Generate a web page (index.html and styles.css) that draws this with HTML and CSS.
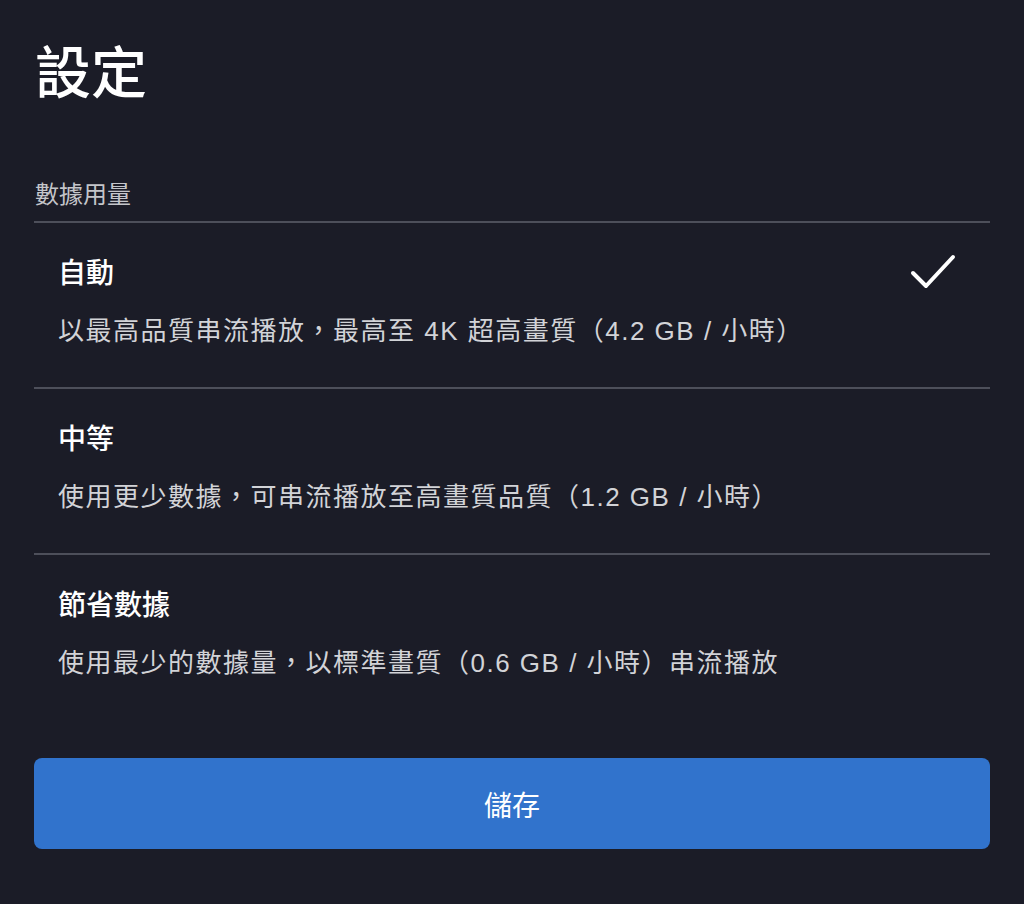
FILE: index.html
```html
<!DOCTYPE html>
<html lang="zh-Hant">
<head>
<meta charset="utf-8">
<title>設定</title>
<link rel="stylesheet" href="styles.css">
</head>
<body>
<main class="page">
  <h1 class="title">設定</h1>
  <div class="section-label">數據用量</div>
  <ul class="options">
    <li class="option selected">
      <div class="option-text">
        <div class="option-title">自動</div>
        <div class="option-desc">以最高品質串流播放，最高至 4K 超高畫質（4.2 GB / 小時）</div>
      </div>
      <svg class="check" width="46" height="40" viewBox="0 0 46 40" aria-hidden="true">
        <path d="M3 19 L16 32 L43 3" fill="none" stroke="#ffffff" stroke-width="4" stroke-linecap="round" stroke-linejoin="round"/>
      </svg>
    </li>
    <li class="option">
      <div class="option-text">
        <div class="option-title">中等</div>
        <div class="option-desc">使用更少數據，可串流播放至高畫質品質（1.2 GB / 小時）</div>
      </div>
    </li>
    <li class="option">
      <div class="option-text">
        <div class="option-title">節省數據</div>
        <div class="option-desc">使用最少的數據量，以標準畫質（0.6 GB / 小時）串流播放</div>
      </div>
    </li>
  </ul>
  <button class="save" type="button">儲存</button>
</main>
</body>
</html>
```
FILE: styles.css
```css
html, body {
  margin: 0;
  padding: 0;
  background: #1b1c27;
}
body {
  font-family: "Liberation Sans", "Noto Sans CJK TC", sans-serif;
  color: #ffffff;
}
.page {
  padding: 34px 34px 0;
}
.title {
  margin: 0;
  padding-left: 1px;
  font-size: 56px;
  line-height: 80px;
  font-weight: 500;
  color: #ffffff;
}
.section-label {
  margin-top: 63px;
  padding-left: 1px;
  font-size: 24px;
  line-height: 36px;
  color: #c4c5ca;
  padding-bottom: 8px;
  border-bottom: 2px solid #4d4f5a;
}
.options {
  list-style: none;
  margin: 0;
  padding: 0;
}
.option {
  display: flex;
  align-items: flex-start;
  justify-content: space-between;
  padding: 33px 34px 38px 24px;
  border-bottom: 2px solid #4d4f5a;
}
.option:last-child {
  border-bottom: none;
}
.option-text {
  display: flex;
  flex-direction: column;
  gap: 21px;
}
.option-title {
  font-size: 28px;
  line-height: 36px;
  font-weight: 500;
  color: #ffffff;
}
.option-desc {
  font-size: 26px;
  line-height: 36px;
  letter-spacing: 1.5px;
  color: #d2d3d7;
}
.check {
  margin-top: -2px;
}
.save {
  display: block;
  width: 100%;
  height: 91px;
  margin-top: 39px;
  border: none;
  border-radius: 8px;
  background: #3173cc;
  color: #ffffff;
  font-family: "Liberation Sans", "Noto Sans CJK TC", sans-serif;
  font-size: 28px;
  font-weight: 400;
}
```
